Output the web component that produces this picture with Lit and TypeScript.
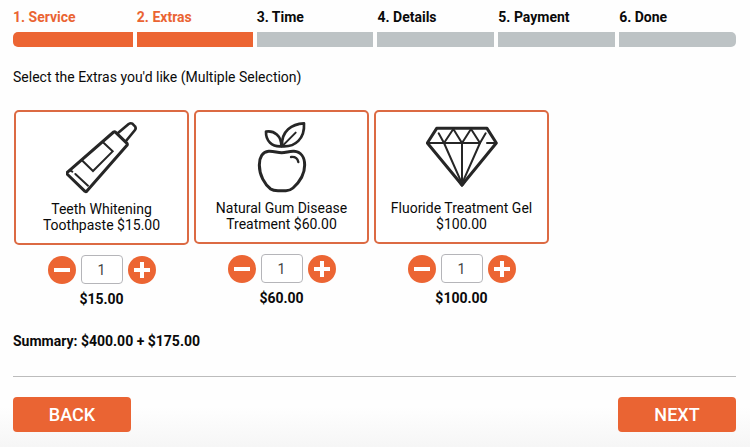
import { LitElement, html, css, svg, type TemplateResult } from "lit";
import { customElement, property, state } from "lit/decorators.js";
import { classMap } from "lit/directives/class-map.js";

const money = (n: number) => `$${n.toFixed(2)}`;

const tube = html`<svg class="icon" viewBox="2 0 216 219" width="72" height="73" aria-hidden="true">
  ${svg`<g fill="none" stroke="#262626" stroke-linejoin="round" stroke-linecap="round">
    <path stroke-width="9" d="M5 155 L145 33 Q148 31 151 34 L185 67 Q187 70 185 73 L64 211 Q62 213 59 211 L5 159 Q3 157 5 155Z"/>
    <path stroke-width="8" d="M157 37 L190 9 Q196 5 201 8 L209 16 Q213 22 209 27 L182 60"/>
    <path stroke-width="6" stroke-linejoin="miter" d="M49 117 L83 150 L142 91 L113 64"/>
    <path stroke-width="6" d="M30 159 L68 194 M15 149 L21 152"/>
  </g>`}
</svg>`;

const apple = html`<svg class="icon" viewBox="2 0 216 216" width="72" height="72" aria-hidden="true">
  ${svg`<g fill="none" stroke="#262626" stroke-width="9" stroke-linejoin="round" stroke-linecap="round">
    <path d="M109 95 C95 95 86 90 70 91 C51 93 42 110 42 132 C42 163 58 190 76 204 Q83 209 98 209 L122 209 Q134 209 143 201 C162 184 178 160 178 132 C178 108 166 92 146 91 C132 90 123 95 109 95Z"/>
    <path stroke-width="7" d="M137 108 Q155 106 159 123"/>
    <path stroke-width="8" d="M62 32 C86 28 109 44 108 76 C80 78 61 60 62 32Z"/>
    <path stroke-width="8" d="M176 7 C140 9 107 30 110 76 C150 79 179 52 176 7Z"/>
    <path stroke-width="6" d="M151 35 L113 73"/>
  </g>`}
</svg>`;

const diamond = html`<svg class="icon" viewBox="2 0 216 216" width="72" height="72" aria-hidden="true">
  ${svg`<g fill="none" stroke="#262626" stroke-linejoin="round" stroke-linecap="round">
    <path stroke-width="9" d="M34 22 H185 L213 66 L110 192 L6 66Z"/>
    <path stroke-width="6" d="M8 66 H164 M185 66 H210 M56 66 L84 24 L110 66 L137 24 L164 66"/>
    <path stroke-width="6" d="M40 37 L56 66 L110 188 M110 66 V188 M181 37 L164 66 L110 188"/>
    <path fill="#262626" stroke-width="8" d="M103 183 H117 L110 193Z"/>
  </g>`}
</svg>`;

interface Extra {
  name: string;
  price: number;
  icon: TemplateResult;
  qty: number;
  selected: boolean;
}

@customElement("step-bar")
class StepBar extends LitElement {
  @property({ type: Number }) current = 0;

  private steps = ["Service", "Extras", "Time", "Details", "Payment", "Done"];

  static styles = css`
    :host { display: block; }
    .steps {
      display: grid;
      grid-template-columns: 120fr 116fr repeat(4, 117fr);
      gap: 4px;
      margin: 0;
      padding: 0;
      list-style: none;
      font-weight: 700;
      line-height: 16px;
    }
    .bar { height: 15px; margin-top: 7px; background: #bdc3c5; }
    .step:first-child .bar { border-radius: 5px 0 0 5px; }
    .step:last-child .bar { border-radius: 0 5px 5px 0; }
    .done { color: #ea6433; }
    .done .bar { background: #ec6533; }
  `;

  render() {
    return html`<ol class="steps">
      ${this.steps.map(
        (s, i) => html`<li class=${classMap({ step: true, done: i < this.current })}>
          <span>${`${i + 1}. ${s}`}</span>
          <div class="bar"></div>
        </li>`
      )}
    </ol>`;
  }
}

@customElement("app-root")
class AppRoot extends LitElement {
  @state() private extras: Extra[] = [
    { name: "Teeth Whitening Toothpaste", price: 15, icon: tube, qty: 1, selected: true },
    { name: "Natural Gum Disease Treatment", price: 60, icon: apple, qty: 1, selected: true },
    { name: "Fluoride Treatment Gel", price: 100, icon: diamond, qty: 1, selected: true },
  ];

  private service = 400;

  static styles = css`
    * { box-sizing: border-box; }
    :host {
      display: block;
      box-sizing: border-box;
      min-height: 100vh;
      padding: 9px 14px 15px 13px;
      background: linear-gradient(to top, #f6f6f6, #fefefe 40px);
      color: #0a0a0a;
      font: 14px/16px Roboto, "Liberation Sans", sans-serif;
    }
    p { margin: 0; }
    button, input { font: inherit; color: inherit; margin: 0; padding: 0; }
    button { cursor: pointer; }
    .intro { margin-top: 22px; }
    .extras {
      display: flex;
      flex-wrap: wrap;
      align-items: flex-start;
      gap: 5px;
      margin-top: 25px;
      padding: 0 1px;
    }
    .extra { display: flex; flex-direction: column; width: 175px; }
    .card {
      display: flex;
      flex-direction: column;
      align-items: center;
      gap: 7px;
      padding: 9px 8px 10px;
      border: 2px solid #d4d4d4;
      border-radius: 5px;
      background: #fff;
    }
    .selected { border-color: #dc6a43; }
    .icon { display: block; }
    .name { max-width: 144px; }
    .quantity {
      display: flex;
      align-items: center;
      justify-content: center;
      gap: 5px;
      margin-top: 10px;
    }
    .round {
      display: grid;
      place-items: center;
      width: 28px;
      height: 28px;
      border: 0;
      border-radius: 50%;
      background: #ec6533;
    }
    .count {
      width: 42px;
      height: 29px;
      border: 1px solid #b5b5b9;
      border-radius: 4px;
      background: #fff;
      color: #444;
      text-align: center;
    }
    .price { margin-top: 7px; font-weight: 700; text-align: center; }
    .summary { margin-top: 26px; font-weight: 700; }
    .actions {
      display: flex;
      justify-content: space-between;
      margin-top: 27px;
      padding-top: 20px;
      border-top: 1px solid #bcbcbc;
    }
    .action {
      width: 118px;
      height: 35px;
      border: 0;
      border-radius: 4px;
      background: #ea6433;
      color: #fff;
      font-size: 18px;
      font-weight: 500;
    }
  `;

  private change(i: number, values: Partial<Extra>) {
    this.extras = this.extras.map((e, n) => (n === i ? { ...e, ...values } : e));
  }

  private sign(plus: boolean) {
    return html`<svg width="16" height="16" viewBox="0 0 16 16" aria-hidden="true">
      <path d=${plus ? "M0 8H16M8 0V16" : "M0 8H16"} stroke="#fff" stroke-width="4" />
    </svg>`;
  }

  private renderExtra(e: Extra, i: number) {
    return html`<div class="extra">
      <button
        class=${classMap({ card: true, selected: e.selected })}
        aria-pressed=${e.selected}
        @click=${() => this.change(i, { selected: !e.selected })}
      >
        ${e.icon}
        <span class="name">${`${e.name} ${money(e.price)}`}</span>
      </button>
      <div class="quantity">
        <button class="round" aria-label="Decrease" @click=${() => this.change(i, { qty: Math.max(1, e.qty - 1) })}>
          ${this.sign(false)}
        </button>
        <input
          class="count"
          inputmode="numeric"
          aria-label="Quantity of ${e.name}"
          .value=${String(e.qty)}
          @change=${(ev: Event) =>
            this.change(i, { qty: Math.max(1, parseInt((ev.target as HTMLInputElement).value) || 1) })}
        />
        <button class="round" aria-label="Increase" @click=${() => this.change(i, { qty: e.qty + 1 })}>
          ${this.sign(true)}
        </button>
      </div>
      <p class="price">${money(e.price * e.qty)}</p>
    </div>`;
  }

  render() {
    const total = this.extras.reduce((t, e) => t + (e.selected ? e.price * e.qty : 0), 0);
    return html`
      <step-bar .current=${2}></step-bar>
      <p class="intro">Select the Extras you'd like (Multiple Selection)</p>
      <div class="extras">${this.extras.map((e, i) => this.renderExtra(e, i))}</div>
      <p class="summary">${`Summary: ${money(this.service)} + ${money(total)}`}</p>
      <div class="actions">
        <button class="action">BACK</button>
        <button class="action">NEXT</button>
      </div>
    `;
  }
}
